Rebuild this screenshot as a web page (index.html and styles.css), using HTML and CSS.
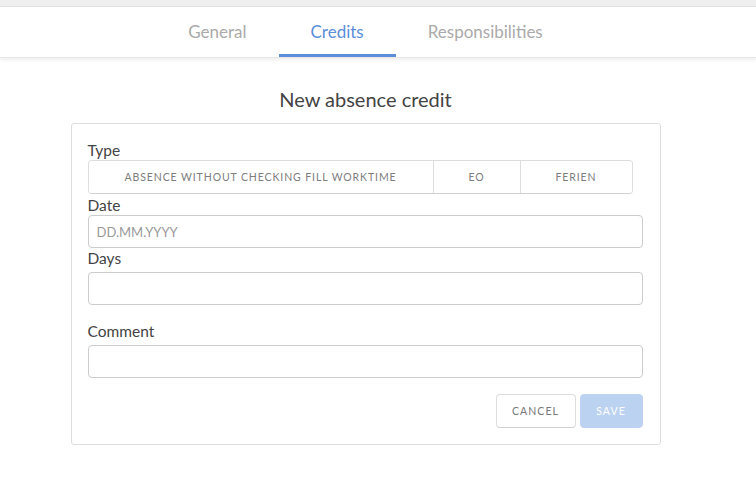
FILE: index.html
```html
<!DOCTYPE html>
<html>
<head>
<meta charset="utf-8">
<link rel="stylesheet" href="styles.css">
</head>
<body>
<div class="topstrip"></div>
<nav class="tabs">
  <a class="tab">General</a>
  <a class="tab active">Credits</a>
  <a class="tab">Responsibilities</a>
</nav>
<main class="content">
  <h1 class="title">New absence credit</h1>
  <form class="card">
    <label class="label">Type</label>
    <div class="segments">
      <button type="button" class="seg seg-wide">Absence without checking fill worktime</button>
      <button type="button" class="seg seg-eo">EO</button>
      <button type="button" class="seg seg-ferien">Ferien</button>
    </div>
    <label class="label">Date</label>
    <input class="input input-date" type="text" placeholder="DD.MM.YYYY">
    <label class="label">Days</label>
    <input class="input input-days" type="text">
    <label class="label label-comment">Comment</label>
    <input class="input input-comment" type="text">
    <div class="actions">
      <button type="button" class="btn btn-cancel">Cancel</button>
      <button type="button" class="btn btn-save">Save</button>
    </div>
  </form>
</main>
</body>
</html>
```

FILE: styles.css
```css
* { box-sizing: border-box; }
html, body { margin: 0; padding: 0; background: #fff; }
body { font-family: "Lato", "Liberation Sans", sans-serif; color: #444; padding-right: 25px; }

.topstrip { height: 7px; background: #efefef; border-bottom: 1px solid #e2e2e2; margin-right: -25px; }

.tabs {
  display: flex;
  justify-content: center;
  height: 51px;
  background: #fff;
  box-shadow: 0 2px 4px rgba(0,0,0,0.07);
  border-bottom: 1px solid #e6e6e6;
  margin-right: -25px;
  padding-right: 25px;
}
.tab {
  display: flex;
  align-items: center;
  justify-content: center;
  font-size: 17px;
  color: #aaa;
  padding: 2px 32px 0;
  border-bottom: 3px solid transparent;
}
.tab.active { color: #5b8fd9; border-bottom-color: #5b8fd9; }

.content { display: flex; flex-direction: column; align-items: center; }
.title {
  margin: 28px 0 0;
  font-size: 20px;
  font-weight: 400;
  color: #444;
  height: 37px;
  line-height: 26px;
}
.card {
  width: 590px;
  border: 1px solid #ddd;
  border-radius: 3px;
  padding: 17px 17px 16px 16px;
  display: flex;
  flex-direction: column;
}
.label { font-size: 15.5px; color: #444; line-height: 19px; }
.label-comment { margin-top: 17px; }

.segments {
  display: flex;
  width: 545px;
  height: 34px;
  border: 1px solid #ddd;
  border-bottom-color: #d0d0d0;
  border-radius: 4px;
  margin-bottom: 2px;
  overflow: hidden;
}
.seg {
  border: none;
  background: #fff;
  font-family: inherit;
  font-size: 10.5px;
  letter-spacing: 0.9px;
  text-transform: uppercase;
  color: #7d7d7d;
  padding: 0;
}
.seg + .seg { border-left: 1px solid #ddd; }
.seg-wide { width: 344px; }
.seg-eo { width: 87px; }
.seg-ferien { flex: 1; }

.input {
  height: 33px;
  border: 1px solid #ccc;
  border-radius: 4px;
  padding: 0 8px;
  font-family: inherit;
  font-size: 13px;
  color: #444;
}
.input::placeholder { color: #9a9a9a; }
.input-date { margin: 0 0 1px; }
.input-days { margin-top: 4px; }
.input-comment { margin-top: 4px; }

.actions { display: flex; justify-content: flex-end; gap: 4px; margin-top: 16px; }
.btn {
  height: 34px;
  border-radius: 4px;
  font-family: inherit;
  font-size: 10.5px;
  letter-spacing: 1.1px;
  text-transform: uppercase;
}
.btn-cancel { width: 80px; background: #fff; border: 1px solid #ddd; border-bottom-color: #d0d0d0; color: #777; }
.btn-save { width: 63px; background: #bcd2f1; border: 1px solid #bcd2f1; color: #fff; }
```
